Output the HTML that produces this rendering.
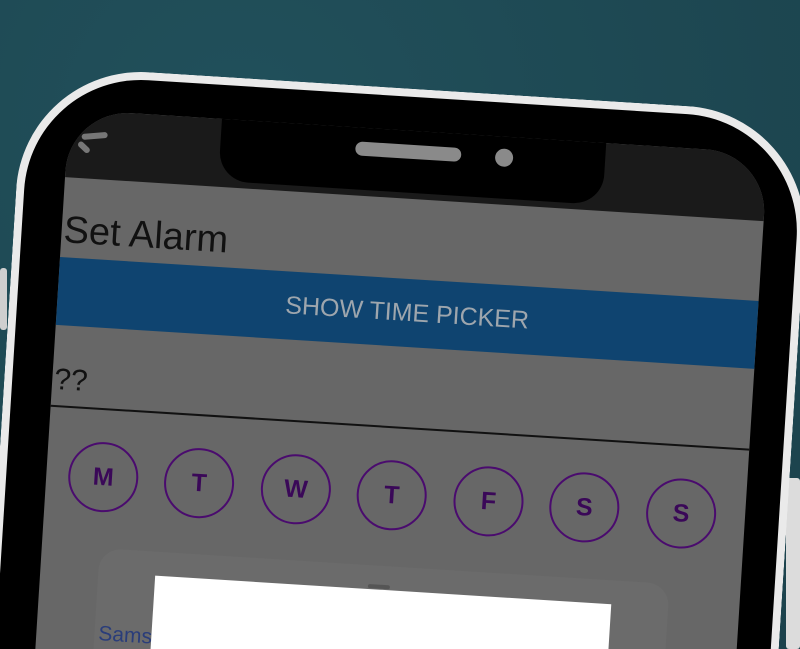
<!DOCTYPE html>
<html><head><meta charset="utf-8"><style>
html,body{margin:0;padding:0;width:800px;height:649px;overflow:hidden;}
#wrap{position:relative;width:800px;height:649px;overflow:hidden;background:radial-gradient(circle at 30% 20%,#21505b,#1b424c);}
#f{position:absolute;left:60px;top:257px;width:0;height:0;transform-origin:0 0;transform:rotate(3.6deg);}
.a{position:absolute;}
#outer{left:-48px;top:-190px;width:790px;height:640px;background:#000;border:8px solid #eaeaea;border-bottom:none;border-radius:125px 125px 0 0;box-sizing:border-box;}
#screen{left:0;top:-148px;width:700px;height:560px;background:#676767;border-radius:62px 62px 0 0;overflow:hidden;}
#status{left:0;top:0;width:700px;height:68px;background:#1a1a1a;}
#notch{left:153px;top:-10px;width:385px;height:72px;background:#000;border-radius:0 0 30px 30px;}
#spk{left:288px;top:14px;width:106px;height:14px;background:#8a8a8a;border-radius:7px;}
#cam{left:428px;top:12px;width:18px;height:18px;background:#8a8a8a;border-radius:50%;}
#ico{left:14px;top:22px;width:26px;height:6px;background:#777;border-radius:3px;transform:rotate(-8deg);}
#ico2{left:10px;top:34px;width:14px;height:6px;background:#777;border-radius:3px;transform:rotate(40deg);}
.t{font-family:"Liberation Sans",sans-serif;}
#title{left:2px;top:100px;font-size:38px;color:#111;}
#blue{left:0;top:148px;width:700px;height:68px;background:#0f4470;color:#9ea6ad;font-size:25px;text-align:center;line-height:68px;}
#q{left:2px;top:254px;font-size:30px;color:#111;}
#line{left:0;top:296px;width:700px;height:2px;background:#111;}
.c{width:66px;height:66px;border:2px solid #4a0b6e;border-radius:50%;text-align:center;line-height:66px;font-weight:bold;font-size:25px;color:#3a0858;top:330px;}
#sheet{left:58px;top:436px;width:571px;height:200px;background:#6b6b6b;border-radius:22px 22px 0 0;}
#handle{left:328px;top:455px;width:22px;height:4px;background:#555;border-radius:2px;}
#white{left:115px;top:460px;width:457px;height:120px;background:#fff;}
#sams{left:62px;top:510px;font-size:21px;color:#2a3d7a;}
#btn{left:0;top:268px;width:7px;height:62px;background:#cfcfcf;border-radius:3px;}
#btn2{left:786px;top:478px;width:14px;height:171px;background:#dcdcdc;border-radius:3px;}
</style></head><body>
<div id="wrap">
<div class="a" id="btn"></div>
<div class="a" id="btn2"></div>
<div id="f">
<div class="a" id="outer"></div>
<div class="a" id="screen">
 <div class="a" id="status"></div>
 <div class="a" id="ico"></div>
 <div class="a" id="ico2"></div>
 <div class="a t" id="title">Set Alarm</div>
 <div class="a t" id="blue">SHOW TIME PICKER</div>
 <div class="a t" id="q">??</div>
 <div class="a" id="line"></div>
 <div class="a t c" style="left:22px">M</div>
 <div class="a t c" style="left:118px">T</div>
 <div class="a t c" style="left:215px">W</div>
 <div class="a t c" style="left:311px">T</div>
 <div class="a t c" style="left:408px">F</div>
 <div class="a t c" style="left:504px">S</div>
 <div class="a t c" style="left:601px">S</div>
 <div class="a" id="sheet"></div>
 <div class="a" id="handle"></div>
 <div class="a t" id="sams">Samsung</div>
 <div class="a" id="white"></div>
 <div class="a" id="notch"></div>
 <div class="a" id="spk"></div>
 <div class="a" id="cam"></div>
</div>
</div>
</div>
</body></html>
